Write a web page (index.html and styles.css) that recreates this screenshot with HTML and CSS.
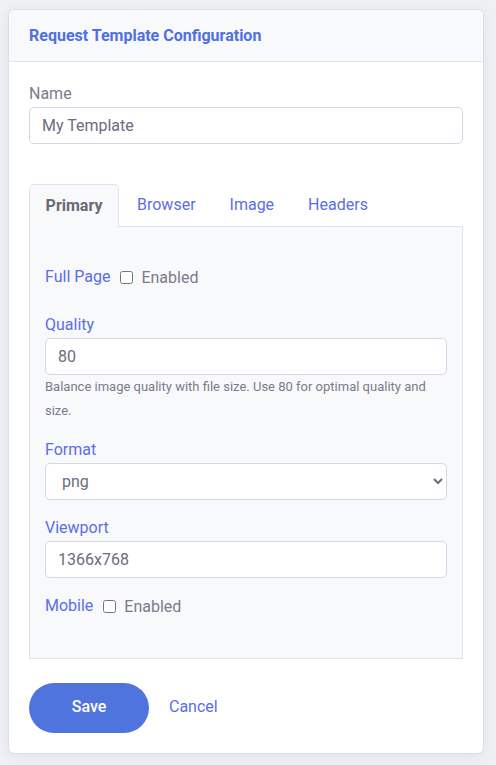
FILE: index.html
```html
<!DOCTYPE html>
<html lang="en">
<head>
<meta charset="utf-8">
<title>Request Template Configuration</title>
<link rel="stylesheet" href="styles.css">
</head>
<body>
<div class="card">
  <div class="card-header">
    <h1 class="title">Request Template Configuration</h1>
  </div>
  <div class="card-body">
    <div class="field">
      <label class="label-gray" for="name">Name</label>
      <input id="name" class="input" type="text" value="My Template">
    </div>

    <div class="tabs">
      <div class="tab active">Primary</div>
      <div class="tab">Browser</div>
      <div class="tab">Image</div>
      <div class="tab">Headers</div>
    </div>
    <div class="panel">
      <div class="check-row first">
        <span class="label">Full Page</span>
        <input type="checkbox" class="check" id="fp">
        <label for="fp" class="check-text">Enabled</label>
      </div>
      <div class="group">
        <label class="label" for="q">Quality</label>
        <input id="q" class="input" type="text" value="80">
        <p class="help">Balance image quality with file size. Use 80 for optimal quality and size.</p>
      </div>
      <div class="group">
        <label class="label" for="f">Format</label>
        <select id="f" class="select"><option>png</option><option>jpeg</option></select>
      </div>
      <div class="group">
        <label class="label" for="v">Viewport</label>
        <input id="v" class="input" type="text" value="1366x768">
      </div>
      <div class="check-row">
        <span class="label">Mobile</span>
        <input type="checkbox" class="check" id="mb">
        <label for="mb" class="check-text">Enabled</label>
      </div>
    </div>

    <div class="actions">
      <button class="btn-save">Save</button>
      <a class="btn-cancel" href="#">Cancel</a>
    </div>
  </div>
</div>
</body>
</html>
```
FILE: styles.css
```css
* { box-sizing: border-box; }
html, body { margin: 0; padding: 0; }
body {
  background: #eef0f4;
  font-family: Roboto, "Liberation Sans", sans-serif;
  width: 496px;
  height: 765px;
  padding: 10px 13px 0 9px;
}
.card {
  width: 474px;
  background: #fff;
  border-radius: 5px;
  box-shadow: 0 2px 12px rgba(40, 50, 90, 0.08), 0 0 0 1px rgba(220, 223, 235, 0.6);
  overflow: hidden;
}
.card-header {
  height: 52px;
  background: #f8f9fb;
  border-bottom: 1px solid #e1e3ec;
  display: flex;
  align-items: center;
  padding: 0 20px 1px;
}
.title {
  margin: 0;
  font-size: 16px;
  font-weight: 700;
  color: #5070e0;
}
.card-body {
  padding: 21px 20px 20px;
}
.field label, .label, .label-gray {
  display: block;
  font-size: 16px;
  line-height: 22px;
}
.label-gray { color: #7b7b8b; }
.label { color: #5b6ee6; }
.input, .select {
  display: block;
  width: 100%;
  height: 37px;
  margin-top: 2px;
  border: 1px solid #d6d6e6;
  border-radius: 5px;
  background: #fff;
  font-family: Roboto, "Liberation Sans", sans-serif;
  font-size: 16px;
  color: #6c6c7c;
  padding: 0 12px;
  outline: none;
}
.select { padding: 0 12px 0 12px; }
.tabs {
  display: flex;
  margin-top: 40px;
  height: 42px;
}
.tab {
  font-size: 16px;
  color: #5b6ee6;
  padding: 0 17px 0 17px;
  display: flex;
  align-items: center;
  padding-bottom: 2px;
}
.tab.active {
  width: 90px;
  justify-content: center;
  font-weight: 700;
  color: #6a6a74;
  background: #f8f9fb;
  border: 1px solid #dfe2ec;
  border-bottom: none;
  border-radius: 5px 5px 0 0;
  margin-bottom: -1px;
  position: relative;
  z-index: 1;
  height: 43px;
  padding-bottom: 1px;
}
.tab:nth-child(2) { padding-left: 18px; }
.panel {
  background: #f8f9fb;
  border: 1px solid #dfe2ec;
  padding: 39px 15px 41px;
}
.check-row {
  display: flex;
  align-items: center;
  height: 22px;
}
.check-row .label { display: inline; }
.check {
  width: 13px;
  height: 13px;
  margin: 0 8px 0 10px;
}
.check-text {
  font-size: 16px;
  color: #7b7b8b;
}
.group { margin-top: 26px; }
.group + .group { margin-top: 16px; }
.group + .group + .group { margin-top: 17px; }
.group + .check-row { margin-top: 17px; }
.help {
  margin: 0;
  font-size: 13px;
  line-height: 24px;
  color: #7b7b8b;
  padding-right: 20px;
}
.actions {
  display: flex;
  align-items: center;
  margin-top: 24px;
  gap: 20px;
}
.btn-save {
  width: 120px;
  height: 50px;
  border: none;
  border-radius: 25px;
  background: #5074de;
  color: #fff;
  font-family: Roboto, "Liberation Sans", sans-serif;
  font-size: 16px;
  font-weight: 500;
  padding: 0 0 3px;
}
.btn-cancel {
  font-size: 16px;
  color: #5b6ee6;
  text-decoration: none;
  padding-bottom: 4px;
}
```
